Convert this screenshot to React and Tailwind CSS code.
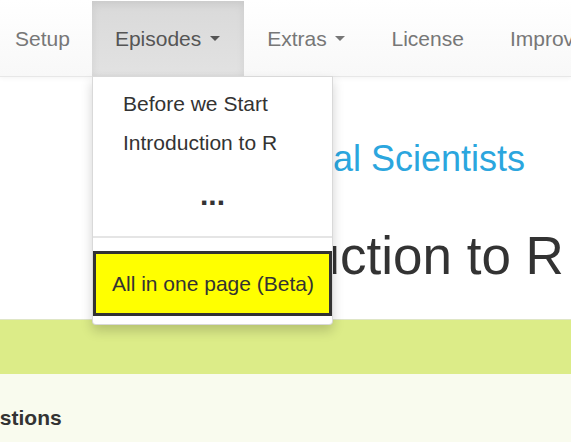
import React from 'react';

const Caret = () => (
  <span className="ml-[3px] inline-block h-0 w-0 border-x-[5px] border-t-[5px] border-x-transparent border-t-current align-middle" />
);

const NavItem = ({ label, caret, active, className = 'px-[23px]' }) => (
  <div
    className={`flex h-full items-center whitespace-nowrap ${className} ${
      active
        ? 'bg-gradient-to-b from-[#d9d9d9] to-[#e2e2e2] text-[#555] shadow-[inset_0_3px_9px_rgba(0,0,0,0.075)]'
        : 'text-[#777]'
    }`}
  >
    <span>{label}</span>
    {caret && (
      <>
        <span>&nbsp;</span>
        <Caret />
      </>
    )}
  </div>
);

export default function App() {
  return (
    <div
      className="relative h-[442px] w-[571px] overflow-hidden bg-white text-[#333]"
      style={{ fontFamily: '"Liberation Sans", Arial, sans-serif' }}
    >
      {/* Navbar */}
      <nav className="flex h-[77px] items-stretch border-b border-[#e7e7e7] bg-gradient-to-b from-white to-[#f8f8f8] pt-[1px] text-[21px] shadow-[0_1px_5px_rgba(0,0,0,0.05)]">
        <NavItem label="Setup" className="pl-[15px] pr-[22px]" />
        <NavItem label="Episodes" caret active className="pl-[23px] pr-[24px]" />
        <NavItem label="Extras" caret />
        <NavItem label="License" />
        <NavItem label="Improve this page" />
      </nav>

      {/* Page heading */}
      <div className="pl-[175px]">
        <div className="mt-[62px] whitespace-nowrap text-[36px] leading-[40px] text-[#2ba6de]">
          R for Social Scientists
        </div>
        <h1 className="mt-[48px] whitespace-nowrap text-[53px] leading-[58px] text-[#333]">
          Introduction to R
        </h1>
      </div>

      {/* Objectives box */}
      <div className="mt-[34px] border-t border-[#dfe6c6]">
        <div className="h-[54px] bg-[#dcec88]" />
        <div className="h-[100px] bg-[#f9fbee] pt-[32px]">
          <h2 className="ml-[-41px] whitespace-nowrap text-[21px] font-bold leading-[23px] text-[#333]">
            Questions
          </h2>
        </div>
      </div>

      {/* Episodes dropdown */}
      <div className="absolute left-[92px] top-[76px] w-[241px] rounded-b-[4px] border border-black/15 bg-white pb-[8px] pt-[7px] text-[21px] shadow-[0_6px_12px_rgba(0,0,0,0.175)]">
        <div className="pl-[30px] leading-[39px] text-[#333]">Before we Start</div>
        <div className="pl-[30px] leading-[39px] text-[#333]">Introduction to R</div>
        <div className="mt-[8px] text-center text-[30px] font-bold leading-[50px] text-[#333]">...</div>
        <div className="mt-[16px] h-[2px] bg-[#e5e5e5]" />
        <div className="mt-[13px] border-[3px] border-[#333] bg-[#ffff00] pl-[16px] leading-[59px] text-[#333]">
          All in one page (Beta)
        </div>
      </div>
    </div>
  );
}
